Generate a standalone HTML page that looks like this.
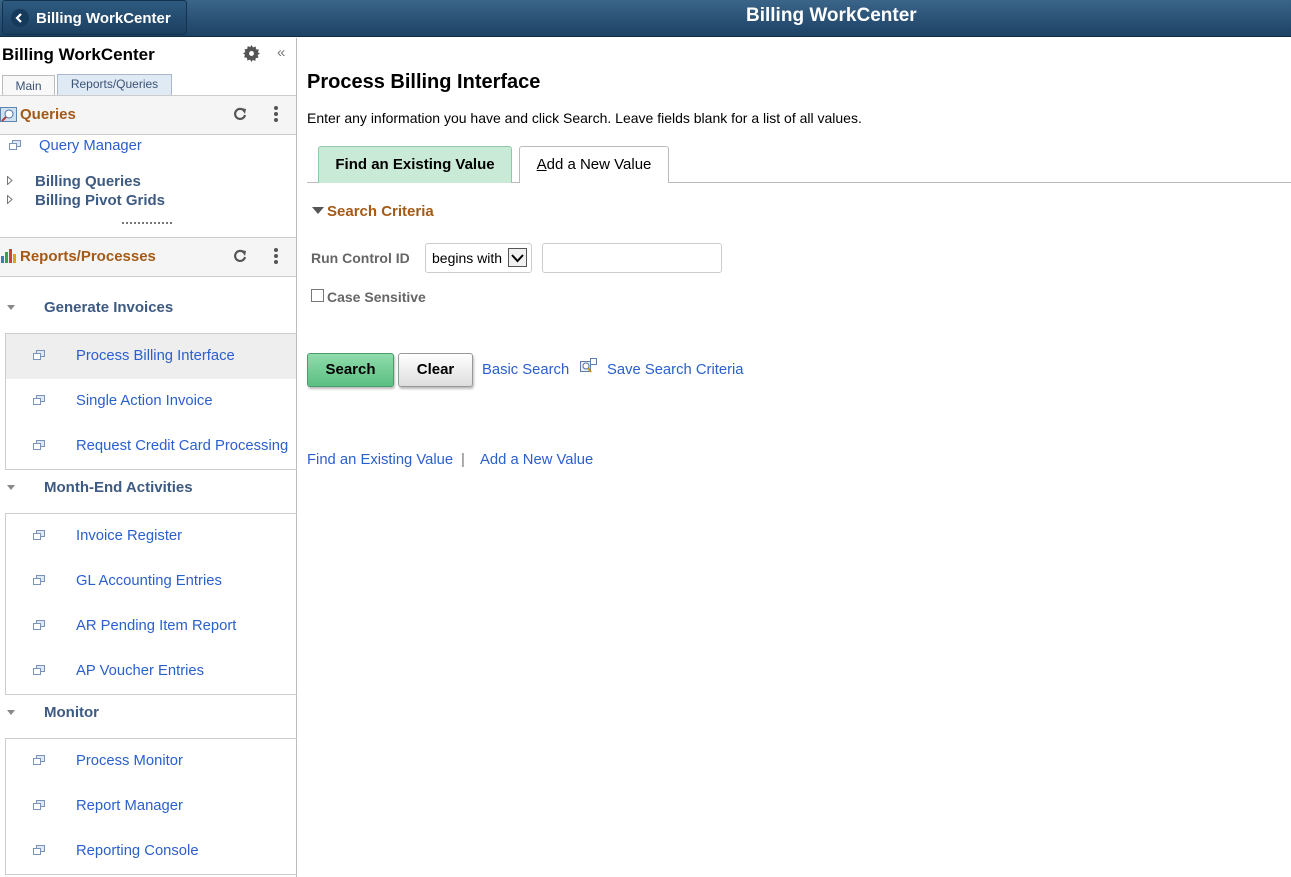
<!DOCTYPE html>
<html><head><style>
*{margin:0;padding:0;box-sizing:border-box}
body{width:1291px;height:877px;overflow:hidden;font-family:"Liberation Sans",Arial,sans-serif;background:#fff;position:relative}
.abs{position:absolute;white-space:nowrap}
.hdr{position:absolute;left:0;top:0;width:1291px;height:37px;background:linear-gradient(#3a6488,#1d4366);border-bottom:1px solid #0f2c45}
.back{position:absolute;left:2px;top:0;width:185px;height:35px;background:linear-gradient(#2f5a80,#1b3f60);border:1px solid #14324d;border-radius:3px;color:#fff;font-weight:bold;font-size:15px}
.side{position:absolute;left:0;top:38px;width:297px;height:839px;border-right:1px solid #bbb}
.lnk{color:#2a5fcc;font-size:14.8px}
.grp{color:#3d5a82;font-weight:bold;font-size:15px}
.box{position:absolute;left:5px;width:292px;border:1px solid #ccc;border-right:none}
.tri{position:absolute;width:0;height:0;border-left:4px solid transparent;border-right:4px solid transparent;border-top:5px solid #888}
.pg{position:absolute;width:11px;height:8px}
.pg:before{content:"";position:absolute;left:3px;top:0;width:7px;height:5px;border:1px solid #7a93b8;background:#dfe8f5}
.pg:after{content:"";position:absolute;left:0;top:3px;width:6px;height:5px;border:1px solid #7a93b8;background:#fff}
.sec{position:absolute;left:0;width:296px;height:40px;background:#f5f5f5;border-top:1px solid #ccc;border-bottom:1px solid #ccc}
.sect{color:#a45a17;font-weight:bold;font-size:15px}
.dots{position:absolute;width:4px;height:4px;border-radius:2px;background:#555}
.btn{position:absolute;height:34px;border-radius:3px;font-weight:bold;font-size:15px;text-align:center;line-height:31px;box-shadow:1px 2px 2px #bbb}
</style></head><body>
<div class="hdr"></div>
<div class="back"><span style="position:absolute;left:8px;top:8px;width:18px;height:18px;border-radius:9px;background:#163a5a;"></span><svg class="abs" style="left:12px;top:11px" width="10" height="12"><path d="M6 2L2 6L6 10" stroke="#fff" stroke-width="2.2" fill="none"/></svg><span class="abs" style="left:33px;top:9px">Billing WorkCenter</span></div>
<div class="abs" style="left:746px;top:5px;color:#fff;font-weight:bold;font-size:19px">Billing WorkCenter</div>

<div class="side">
<div class="abs" style="left:2px;top:7px;font-weight:bold;font-size:17px;color:#000">Billing WorkCenter</div>
<svg class="abs" style="left:243px;top:7px" width="17" height="17" viewBox="0 0 16 16"><path d="M8 0l1.4 2.2 2.5-.8.4 2.6 2.6.4-.8 2.5L16 8l-2.2 1.4.8 2.5-2.6.4-.4 2.6-2.5-.8L8 16l-1.4-2.2-2.5.8-.4-2.6-2.6-.4.8-2.5L0 8l2.2-1.4-.8-2.5 2.6-.4.4-2.6 2.5.8z" fill="#555"/><circle cx="8" cy="8" r="2.3" fill="#fff"/></svg>
<div class="abs" style="left:277px;top:6px;color:#777;font-size:15px">«</div>
<div class="abs" style="left:2px;top:37px;width:53px;height:20px;border:1px solid #bbb;border-bottom:none;background:#f8f8f8;font-size:12px;color:#3b5275;text-align:center;line-height:20px">Main</div>
<div class="abs" style="left:57px;top:36px;width:115px;height:21px;border:1px solid #a9b8cc;border-bottom:none;background:#e0eaf5;font-size:12px;color:#3b5275;text-align:center;line-height:18px">Reports/Queries</div>

<div class="sec" style="top:57px;height:40px"></div>
<svg class="abs" style="left:0;top:69px" width="17" height="15"><rect x="0.5" y="0.5" width="16" height="14" fill="#cfe0f0" stroke="#5b86b0"/><circle cx="9" cy="7" r="4" fill="#fff" stroke="#4a73a0"/><path d="M6 10L2 14" stroke="#b04040" stroke-width="2"/></svg>
<div class="abs sect" style="left:20px;top:68px">Queries</div>
<svg class="abs" style="left:233px;top:69px" width="14" height="14" viewBox="0 0 14 14"><path d="M11.5 4.5A5 5 0 1 0 12 8" stroke="#555" stroke-width="2.2" fill="none"/><path d="M8 1L13 2L12 7z" fill="#555"/></svg>
<div class="dots" style="left:274px;top:68px"></div><div class="dots" style="left:274px;top:74px"></div><div class="dots" style="left:274px;top:80px"></div>
<div class="pg" style="left:9px;top:102px"></div>
<div class="abs lnk" style="left:39px;top:100px">Query Manager</div>
<svg class="abs" style="left:7px;top:138px" width="6" height="9"><path d="M0.5 0.5L5 4.5L0.5 8.5z" fill="#fff" stroke="#777"/></svg>
<div class="abs grp" style="left:35px;top:135px">Billing Queries</div>
<svg class="abs" style="left:7px;top:157px" width="6" height="9"><path d="M0.5 0.5L5 4.5L0.5 8.5z" fill="#fff" stroke="#777"/></svg>
<div class="abs grp" style="left:35px;top:154px">Billing Pivot Grids</div>
<div class="abs" style="left:122px;top:184px;width:50px;border-top:2px dotted #777"></div>

<div class="sec" style="top:199px;height:40px"></div>
<svg class="abs" style="left:0;top:210px" width="16" height="15"><rect x="1" y="8" width="3" height="7" fill="#3a7ac0"/><rect x="5" y="4" width="3" height="11" fill="#3aa050"/><rect x="9" y="1" width="3" height="14" fill="#d04030"/><rect x="13" y="6" width="3" height="9" fill="#e0a020"/></svg>
<div class="abs sect" style="left:20px;top:210px">Reports/Processes</div>
<svg class="abs" style="left:233px;top:211px" width="14" height="14" viewBox="0 0 14 14"><path d="M11.5 4.5A5 5 0 1 0 12 8" stroke="#555" stroke-width="2.2" fill="none"/><path d="M8 1L13 2L12 7z" fill="#555"/></svg>
<div class="dots" style="left:274px;top:210px"></div><div class="dots" style="left:274px;top:216px"></div><div class="dots" style="left:274px;top:222px"></div>
</div>

<div class="tri" style="left:7px;top:305px"></div>
<div class="abs grp" style="left:44px;top:299px">Generate Invoices</div>
<div class="box" style="top:333px;height:137px"></div>
<div class="abs" style="left:6px;top:334px;width:290px;height:45px;background:#eee"></div>
<div class="pg" style="left:33px;top:350px"></div><div class="abs lnk" style="left:76px;top:348px">Process Billing Interface</div>
<div class="pg" style="left:33px;top:395px"></div><div class="abs lnk" style="left:76px;top:393px">Single Action Invoice</div>
<div class="pg" style="left:33px;top:440px"></div><div class="abs lnk" style="left:76px;top:438px">Request Credit Card Processing</div>

<div class="tri" style="left:7px;top:485px"></div>
<div class="abs grp" style="left:44px;top:479px">Month-End Activities</div>
<div class="box" style="top:513px;height:182px"></div>
<div class="pg" style="left:33px;top:530px"></div><div class="abs lnk" style="left:76px;top:528px">Invoice Register</div>
<div class="pg" style="left:33px;top:575px"></div><div class="abs lnk" style="left:76px;top:573px">GL Accounting Entries</div>
<div class="pg" style="left:33px;top:620px"></div><div class="abs lnk" style="left:76px;top:618px">AR Pending Item Report</div>
<div class="pg" style="left:33px;top:665px"></div><div class="abs lnk" style="left:76px;top:663px">AP Voucher Entries</div>

<div class="tri" style="left:7px;top:710px"></div>
<div class="abs grp" style="left:44px;top:704px">Monitor</div>
<div class="box" style="top:738px;height:137px"></div>
<div class="pg" style="left:33px;top:755px"></div><div class="abs lnk" style="left:76px;top:753px">Process Monitor</div>
<div class="pg" style="left:33px;top:800px"></div><div class="abs lnk" style="left:76px;top:798px">Report Manager</div>
<div class="pg" style="left:33px;top:845px"></div><div class="abs lnk" style="left:76px;top:843px">Reporting Console</div>

<div class="abs" style="left:307px;top:71px;font-weight:bold;font-size:20px;color:#000">Process Billing Interface</div>
<div class="abs" style="left:307px;top:110px;font-size:14px;color:#000">Enter any information you have and click Search. Leave fields blank for a list of all values.</div>
<div class="abs" style="left:307px;top:182px;width:984px;border-top:1px solid #bbb"></div>
<div class="abs" style="left:318px;top:146px;width:194px;height:37px;background:#c9ead7;border:1px solid #8fcaa8;border-bottom:none;border-radius:3px 3px 0 0;font-weight:bold;font-size:15px;text-align:center;line-height:36px">Find an Existing Value</div>
<div class="abs" style="left:519px;top:146px;width:150px;height:37px;background:#fff;border:1px solid #bbb;border-bottom:none;border-radius:3px 3px 0 0;font-size:15px;text-align:center;line-height:36px"><u>A</u>dd a New Value</div>
<div class="tri" style="left:312px;top:207px;border-left-width:6px;border-right-width:6px;border-top-width:7px;border-top-color:#555"></div>
<div class="abs sect" style="left:327px;top:203px">Search Criteria</div>
<div class="abs" style="left:311px;top:250px;font-weight:bold;font-size:14px;color:#666">Run Control ID</div>
<div class="abs" style="left:425px;top:243px;width:107px;height:30px;border:1px solid #ccc;border-radius:3px;font-size:14px;padding:6px 0 0 6px">begins with</div>
<div class="abs" style="left:508px;top:248px;width:19px;height:19px;border:1px solid #555;background:#f0f0f0"><svg width="17" height="17"><path d="M3 6L8.5 12L14 6" stroke="#000" stroke-width="2" fill="none"/></svg></div>
<div class="abs" style="left:542px;top:243px;width:180px;height:30px;border:1px solid #ccc;border-radius:3px"></div>
<div class="abs" style="left:311px;top:289px;width:13px;height:13px;border:1px solid #777;background:#fff"></div>
<div class="abs" style="left:327px;top:289px;font-weight:bold;font-size:14px;color:#666">Case Sensitive</div>
<div class="btn" style="left:307px;top:353px;width:87px;background:linear-gradient(#8fdcab,#5cbf82);border:1px solid #4a9c6a">Search</div>
<div class="btn" style="left:398px;top:353px;width:75px;background:linear-gradient(#fff,#ddd);border:1px solid #999">Clear</div>
<div class="abs lnk" style="left:482px;top:362px">Basic Search</div>
<svg class="abs" style="left:580px;top:358px" width="18" height="16"><rect x="0.5" y="3.5" width="10" height="10" fill="#e8eef8" stroke="#5b7fb0"/><rect x="10.5" y="0.5" width="6" height="6" fill="#fff" stroke="#5b7fb0"/><circle cx="6" cy="8" r="3" fill="#fff" stroke="#4a73a0"/><path d="M8 10L11 14" stroke="#c09020" stroke-width="2"/></svg>
<div class="abs lnk" style="left:607px;top:362px">Save Search Criteria</div>
<div class="abs lnk" style="left:307px;top:452px">Find an Existing Value</div>
<div class="abs" style="left:461px;top:451px;color:#777;font-size:15px">|</div>
<div class="abs lnk" style="left:480px;top:452px">Add a New Value</div>
</body></html>
